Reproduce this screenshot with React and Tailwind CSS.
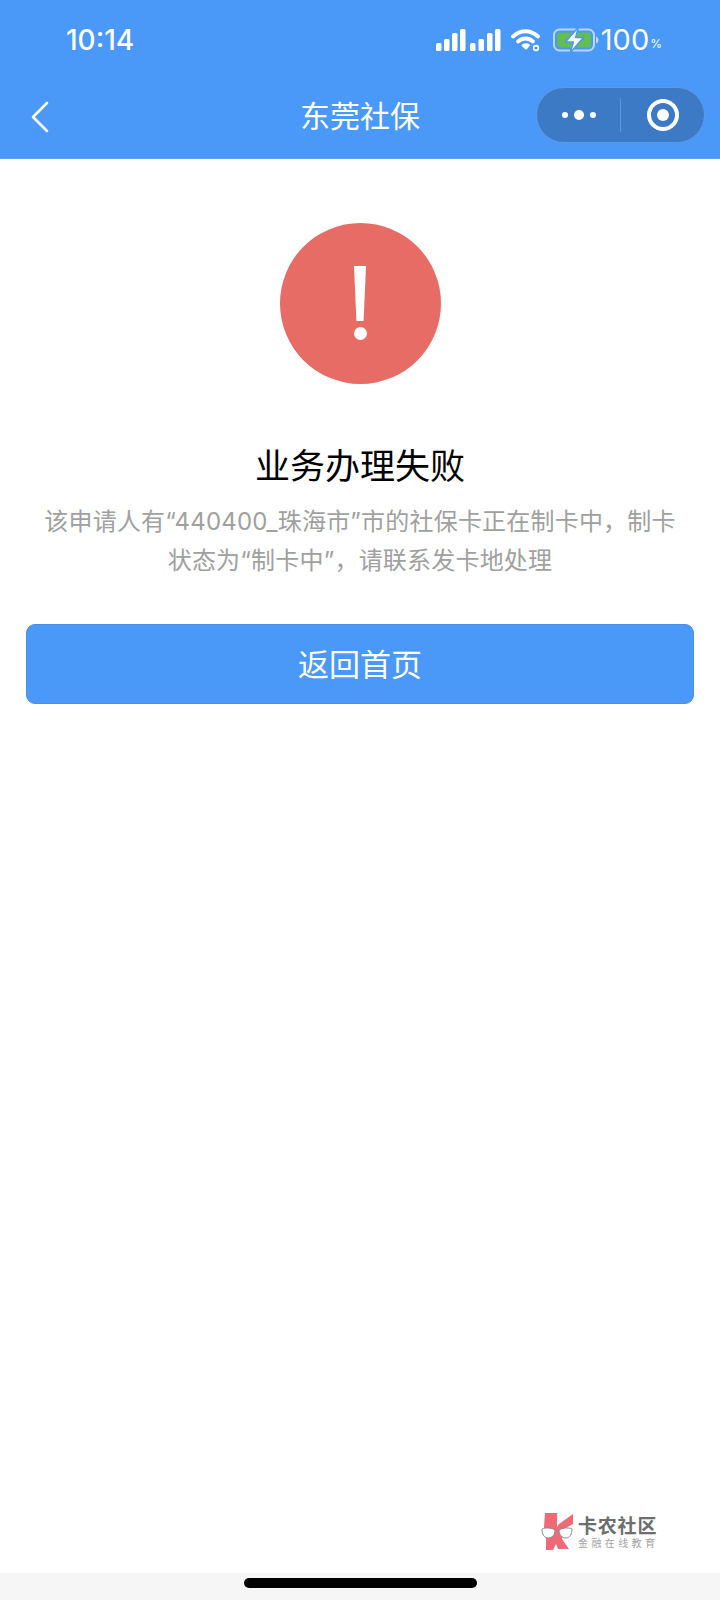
const CJK = `font-["Noto_Sans_CJK_SC","Noto_Sans",sans-serif]`;

function Signal() {
  const bars = [
    [2, 14, 8], [10, 10, 12], [18, 4, 18], [26, 0, 22],
    [36, 14, 8], [44.5, 10, 12], [53, 4, 18], [61, 0, 22],
  ];
  return (
    <svg width="67" height="22" viewBox="0 0 67 22" fill="#fff">
      {bars.map(([x, y, h]) => (
        <rect key={x} x={x} y={y} width="5.5" height={h} rx="1.5" />
      ))}
    </svg>
  );
}

function Wifi() {
  return (
    <svg width="30" height="24" viewBox="0 0 30 24" fill="none" stroke="#fff" strokeLinecap="round">
      <path d="M2 8.5C9.5 1.5 19.5 1.5 27 8.5" strokeWidth="3.8" />
      <path d="M7 13.5C11.5 9.5 17.5 9.5 22 13.5" strokeWidth="3.8" />
      <path d="M15 20.5L11.5 17.5C13 16 16.5 16 18 17.2Z" fill="#fff" strokeWidth="2" strokeLinejoin="round" />
      <circle cx="25" cy="20" r="2.4" strokeWidth="1.6" fill="#4a98f7" />
    </svg>
  );
}

function Battery() {
  return (
    <svg width="46" height="28" viewBox="0 0 46 28" fill="none">
      <rect x="1" y="3.5" width="40" height="21" rx="5.5" stroke="#b9d7fb" strokeWidth="2" />
      <rect x="4" y="6.5" width="34" height="15" rx="3" fill="#63bd55" />
      <path d="M43 10.5C44.5 11 45.5 12.5 45.5 14C45.5 15.5 44.5 17 43 17.5Z" fill="#b9d7fb" />
      <path
        d="M25.5 1L12.5 16H20.5L17 27L30.5 11.5H22.5Z"
        fill="#fff"
        stroke="#4a98f7"
        strokeWidth="1.4"
        strokeLinejoin="round"
      />
    </svg>
  );
}

function Capsule() {
  return (
    <div className="flex items-center w-[169px] h-[56px] mb-[3px] rounded-full bg-[#3c7ac6] border border-[#5e9ae4]">
      <div className="flex-1 flex items-center justify-center gap-[6px]">
        <span className="w-[6px] h-[6px] rounded-full bg-white" />
        <span className="w-[10px] h-[10px] rounded-full bg-white" />
        <span className="w-[6px] h-[6px] rounded-full bg-white" />
      </div>
      <div className="w-px h-[34px] bg-[#5f94d6]" />
      <div className="w-[83px] flex items-center justify-center">
        <div className="w-[32px] h-[32px] rounded-full border-[4px] border-white flex items-center justify-center">
          <span className="w-[12px] h-[12px] rounded-full bg-white" />
        </div>
      </div>
    </div>
  );
}

function Watermark() {
  return (
    <div className="absolute left-[541px] top-[1513px] flex items-start gap-[5px]">
      <svg width="32" height="37" viewBox="0 0 32 37">
        <path d="M4 0H16V14L18 11L32 1V11L21 17V26L28 36H17L15 31L12 37H5V26L3 14Z" fill="#ee6a77" />
        <path d="M1 16C5 14 11 15 14 17C14 22 11 25 7 25C3 25 1 21 1 16Z" fill="#fff" stroke="#8a8a8a" strokeWidth="1" />
        <path d="M31 16C27 14 21 15 18 17C18 22 21 25 25 25C29 25 31 21 31 16Z" fill="#fff" stroke="#8a8a8a" strokeWidth="1" />
      </svg>
      <div className="flex flex-col pt-[2px]">
        <span className="text-[19px] leading-[20px] h-[20px] font-bold text-[#6d6d6d] tracking-[0.8px] whitespace-nowrap">卡农社区</span>
        <span className="mt-[1px] text-[10px] leading-[13px] text-[#a3a3a3] tracking-[3.4px] whitespace-nowrap">金融在线教育</span>
      </div>
    </div>
  );
}

export default function App() {
  return (
    <div className={`relative w-[720px] h-[1600px] bg-white flex flex-col ${CJK}`}>
      <div className="bg-[#4a98f7] h-[159px] shrink-0 border-b border-[#5f9ff0] text-white">
        <div className="h-[80px] flex items-center pl-[66px] pr-[58px]">
          <span className="font-['Inter',sans-serif] text-[28px] font-medium">10:14</span>
          <div className="ml-auto flex items-center">
            <Signal />
            <div className="ml-[10px]"><Wifi /></div>
            <div className="ml-[12px]"><Battery /></div>
            <span className="ml-[2px] font-['Inter',sans-serif] text-[29px]">100</span>
            <span className="font-['Inter',sans-serif] text-[12px] ml-[1px] mt-[8px]">%</span>
          </div>
        </div>
        <div className="h-[72px] grid grid-cols-[1fr_auto_1fr] items-center px-[15px]">
          <svg className="ml-[15px] mt-[1px]" width="20" height="32" viewBox="0 0 20 32" fill="none" stroke="#fff" strokeWidth="2.6" strokeLinecap="round" strokeLinejoin="round">
            <path d="M17 2L3 16L17 30" />
          </svg>
          <span className="text-[30px] leading-[40px] mb-[5px]">东莞社保</span>
          <div className="justify-self-end"><Capsule /></div>
        </div>
      </div>

      <div className="flex-1 flex flex-col items-center pt-[64px] px-[26px]">
        <div className="w-[161px] h-[161px] rounded-full bg-[#e76c65] flex flex-col items-center pt-[43px]">
          <div className="w-[12px] h-[55px] bg-white [clip-path:polygon(0_0,100%_0,80%_100%,20%_100%)]" />
          <div className="w-[13px] h-[13px] rounded-full bg-white mt-[6px]" />
        </div>
        <h1 className="mt-[55px] text-[35px] leading-[50px] font-normal text-black">业务办理失败</h1>
        <p className="mt-[14px] w-[640px] text-center font-['Inter','Noto_Sans_CJK_SC',sans-serif] text-[24px] tracking-[0.2px] leading-[38.5px] text-[#a0a0a0]">
          该申请人有“440400_珠海市”市的社保卡正在制卡中，制卡状态为“制卡中”，请联系发卡地处理
        </p>
        <button className="mt-[44px] w-full h-[80px] pb-[2px] rounded-[9px] bg-[#4a98f7] border border-[#4a8fe6] text-white text-[31px]">
          返回首页
        </button>
      </div>

      <div className="h-[27px] shrink-0 bg-[#f6f6f6] flex justify-center pt-[5px]">
        <div className="w-[233px] h-[10px] rounded-full bg-black" />
      </div>
      <Watermark />
    </div>
  );
}
